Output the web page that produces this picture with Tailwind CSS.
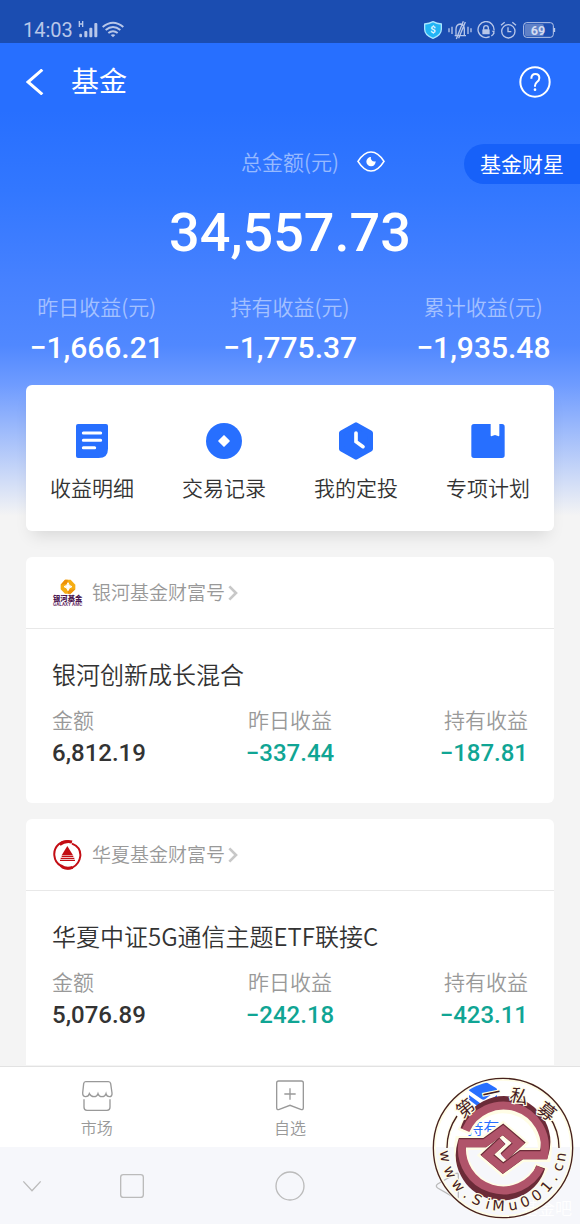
<!DOCTYPE html>
<html lang="zh-CN">
<head>
    <meta charset="UTF-8">
    <meta name="viewport" content="width=device-width, initial-scale=1.0">
    <title>基金</title>
    <script src="https://cdn.jsdelivr.net/npm/@tailwindcss/browser@4"></script>
</head>
<body class="relative min-h-screen bg-[#f4f4f4] font-['Noto_Sans_CJK_SC',sans-serif] font-[350] text-[#333]">
    <div class="bg-[linear-gradient(180deg,#276fff_0px,#276fff_110px,#3277ff_190px,#4681ff_280px,#5088ff_345px,#6e9bff_384px,#f4f4f4_516px)] bg-no-repeat">
        <!-- Status bar -->
        <div class="flex h-[43px] items-end justify-between bg-[#1b4db1] pr-[24px] pb-px pl-[23px] text-[#b8c7e9]">
            <div class="flex items-center">
                <span class="font-[Roboto] text-[20px] leading-[24px] font-normal">14:03</span>
                <svg class="ml-[5px] h-[18px] w-[20px]" viewBox="0 0 60 54" fill="currentColor">
                    <path d="M2 0h4v7h6V0h4v18h-4v-7H6v7H2z"/>
                    <rect x="4" y="38" width="8" height="11" rx="3"/>
                    <rect x="19" y="30" width="9" height="19" rx="3"/>
                    <rect x="34" y="20" width="9" height="29" rx="3"/>
                    <rect x="49" y="6" width="9" height="43" rx="3"/>
                </svg>
                <svg class="ml-[4px] h-[18px] w-[22px]" viewBox="0 0 66 54" fill="none" stroke="currentColor" stroke-width="6">
                    <path d="M2 18Q33-8 64 18M11 27q22-18 44 0M19 36q14-11 28 0"/>
                    <path d="M33 49l-7-7q7-5 14 0z" fill="currentColor" stroke="none"/>
                </svg>
            </div>
            <div class="flex h-[25px] items-center">
                <svg class="h-[18px] w-[18px]" viewBox="0 0 54 54">
                    <path d="M27 2Q38 8 52 9v16q0 18-25 27Q2 43 2 25V9q14-1 25-7z" fill="#22b4f5" stroke="#a9e6ff" stroke-width="4"/>
                    <text x="27" y="37" text-anchor="middle" fill="#dff5ff" font-family="Roboto" font-weight="700" font-size="29">$</text>
                </svg>
                <svg class="ml-[6px] h-[20px] w-[24px]" viewBox="0 0 72 60" fill="none" stroke="currentColor" stroke-width="4">
                    <path d="M3 25v12M12 20v22M60 20v22M69 25v12M20 47h34M24 46V28q0-15 13-16 12 1 12 16v18M46 4L25 57M52 6L32 55"/>
                </svg>
                <svg class="ml-[5px] h-[18px] w-[18px]" viewBox="0 0 54 54" fill="none" stroke="currentColor" stroke-width="4">
                    <path d="M38 47A24 24 0 1 1 51 28M43 45q6-4 8-10"/>
                    <path d="M44 29h9l-1 9z" fill="currentColor" stroke="none"/>
                    <rect x="16" y="25" width="22" height="15" rx="2" fill="currentColor" stroke="none"/>
                    <path d="M20 26v-5q0-7 7-7t7 7v5"/>
                </svg>
                <svg class="ml-[5px] h-[18px] w-[17px]" viewBox="0 0 51 54" fill="none" stroke="currentColor" stroke-width="4">
                    <circle cx="25" cy="31" r="20"/>
                    <path d="M24 19v13h10M3 13l11-9M48 13L37 4"/>
                </svg>
                <svg class="ml-[6px] h-[16px] w-[33px]" viewBox="0 0 99 48">
                    <rect x="2" y="2" width="89" height="44" rx="9" fill="none" stroke="currentColor" stroke-width="3"/>
                    <rect x="6" y="6" width="56" height="36" rx="4" fill="#5f80c6"/>
                    <path d="M94 18v12" stroke="currentColor" stroke-width="5"/>
                    <text x="45" y="38" text-anchor="middle" fill="#d3dcf2" font-family="Roboto" font-weight="700" font-size="38">69</text>
                </svg>
            </div>
        </div>

        <!-- Title bar -->
        <header class="flex h-[77px] items-center justify-between pr-[29px] pl-[26px] text-white">
            <div class="flex items-center">
                <a href="#" aria-label="返回">
                    <svg class="h-[26px] w-[18px]" viewBox="0 0 54 78" fill="none" stroke="currentColor" stroke-width="9">
                        <path d="M49 2L6 39l43 37"/>
                    </svg>
                </a>
                <h1 class="ml-[27px] pb-[4px] text-[28px] leading-[40px] font-normal">基金</h1>
            </div>
            <button type="button" aria-label="帮助">
                <svg class="h-[32px] w-[32px]" viewBox="0 0 96 96" fill="none" stroke="currentColor">
                    <circle cx="48" cy="48" r="44" stroke-width="6"/>
                    <path d="M37 38q0-14 12-14t12 12q0 7-7 12-6 5-6 11v3" stroke-width="6"/>
                    <circle cx="48" cy="71" r="4" fill="currentColor" stroke="none"/>
                </svg>
            </button>
        </header>

        <!-- Totals -->
        <section class="text-center text-white">
            <div class="grid grid-cols-[1fr_auto_1fr] items-start pt-[24px]">
                <span class="col-start-2 flex items-center gap-[18px] pl-[46px] text-[21px] leading-[34px] text-white/50">
                    总金额(元)
                    <button type="button" aria-label="隐藏金额" class="text-white">
                        <svg class="h-[21px] w-[28px]" viewBox="0 0 84 63" fill="none" stroke="currentColor" stroke-width="5">
                            <path d="M3 31Q21 3 42 3t39 28Q63 60 42 60T3 31z"/>
                            <path d="M42 18a14 14 0 1 0 14 13q-8 2-12-3-4-4-2-10z" fill="currentColor" stroke="none"/>
                        </svg>
                    </button>
                </span>
                <a href="#" class="justify-self-end rounded-l-full bg-[#1761f9] pr-[16px] pb-[2px] pl-[16px] text-[21px] leading-[38px] font-normal">基金财星</a>
            </div>
            <p class="mt-[17px] font-[Roboto] text-[54px] leading-[64px] font-medium">34,557.73</p>
            <dl class="mt-[27px] grid grid-cols-3">
                <div>
                    <dt class="text-[21px] leading-[28px] text-white/50">昨日收益(元)</dt>
                    <dd class="mt-[8px] font-[Roboto] text-[30px] leading-[40px] font-medium">−1,666.21</dd>
                </div>
                <div>
                    <dt class="text-[21px] leading-[28px] text-white/50">持有收益(元)</dt>
                    <dd class="mt-[8px] font-[Roboto] text-[30px] leading-[40px] font-medium">−1,775.37</dd>
                </div>
                <div>
                    <dt class="text-[21px] leading-[28px] text-white/50">累计收益(元)</dt>
                    <dd class="mt-[8px] font-[Roboto] text-[30px] leading-[40px] font-medium">−1,935.48</dd>
                </div>
            </dl>
        </section>

        <!-- Shortcuts -->
        <nav class="mx-[26px] mt-[17px] grid grid-cols-4 rounded-[6px] bg-white pt-[36px] pb-[30px] text-center text-[21px] leading-[28px] shadow-[0_10px_16px_-6px_rgba(0,0,0,0.12)]">
            <a href="#" class="flex flex-col items-center gap-[12px]">
                <svg class="h-[40px] w-[40px]" viewBox="0 0 120 120">
                    <path d="M18 9h84q6 0 6 6v68q0 28-28 28H18q-6 0-6-6V15q0-6 6-6z" fill="#276fff"/>
                    <path d="M34 36h52M34 58h52M34 80h34" stroke="#fff" stroke-width="9" stroke-linecap="round"/>
                </svg>
                收益明细
            </a>
            <a href="#" class="flex flex-col items-center gap-[12px]">
                <svg class="h-[40px] w-[40px]" viewBox="0 0 120 120">
                    <circle cx="60" cy="60" r="54" fill="#276fff"/>
                    <path d="M60 45l15 15-15 15-15-15z" fill="#fff" stroke="#fff" stroke-width="5" stroke-linejoin="round"/>
                </svg>
                交易记录
            </a>
            <a href="#" class="flex flex-col items-center gap-[12px]">
                <svg class="h-[40px] w-[40px]" viewBox="0 0 120 120">
                    <path d="M60 12l43 24v48l-43 24-43-24V36z" fill="#276fff" stroke="#276fff" stroke-width="16" stroke-linejoin="round"/>
                    <path d="M60 36v26l21 15" fill="none" stroke="#fff" stroke-width="11" stroke-linecap="round"/>
                </svg>
                我的定投
            </a>
            <a href="#" class="flex flex-col items-center gap-[12px]">
                <svg class="h-[40px] w-[40px]" viewBox="0 0 120 120">
                    <path d="M18 9h50v34q0 4 4 2l9-3 9 3q4 2 4-2V9h8q8 0 8 8v86q0 8-8 8H18q-8 0-8-8V17q0-8 8-8z" fill="#276fff"/>
                </svg>
                专项计划
            </a>
        </nav>
    </div>

    <!-- Funds -->
    <main class="mx-[26px] mt-[26px] flex flex-col gap-[16px] pb-px">
        <section class="rounded-[6px] bg-white">
            <a href="#" class="flex h-[72px] items-center border-b border-[#e8e8e8] px-[26px] text-[19px] text-[#999]">
                <svg class="h-[30px] w-[32px]" viewBox="0 0 96 90">
                    <path d="M39 5h17l14 15v14L56 47H39L26 34V20z" fill="#f5ad14"/>
                    <path d="M26 20L39 5h8v12zM70 34L56 47h-8V36z" fill="#ee9109"/>
                    <path d="M48 14q2 10 12 12-10 2-12 12-2-10-12-12 10-2 12-12z" fill="#fff" stroke="#fff" stroke-width="3"/>
                    <text x="47" y="68" text-anchor="middle" font-size="22" font-weight="900" fill="#4b1750">银河基金</text>
                    <text x="47" y="84" text-anchor="middle" font-family="Roboto" font-size="14" font-weight="700" fill="#6d3a70">GALAXY AMC</text>
                </svg>
                <span class="ml-[8px]">银河基金财富号</span>
                <svg class="ml-[3px] h-[16px] w-[10px]" viewBox="0 0 30 48" fill="none" stroke="#c8c8c8" stroke-width="8">
                    <path d="M4 4l20 20L4 44"/>
                </svg>
            </a>
            <div class="px-[26px] pt-[28px] pb-[34px]">
                <h2 class="text-[24px] leading-[34px]">银河创新成长混合</h2>
                <dl class="mt-[14px] grid grid-cols-3">
                    <div>
                        <dt class="text-[21px] leading-[28px] text-[#999]">金额</dt>
                        <dd class="mt-[4px] font-[Roboto] text-[24px] leading-[32px] font-medium">6,812.19</dd>
                    </div>
                    <div class="text-center">
                        <dt class="text-[21px] leading-[28px] text-[#999]">昨日收益</dt>
                        <dd class="mt-[4px] font-[Roboto] text-[24px] leading-[32px] font-medium text-[#10a594]">−337.44</dd>
                    </div>
                    <div class="text-right">
                        <dt class="text-[21px] leading-[28px] text-[#999]">持有收益</dt>
                        <dd class="mt-[4px] font-[Roboto] text-[24px] leading-[32px] font-medium text-[#10a594]">−187.81</dd>
                    </div>
                </dl>
            </div>
        </section>

        <section class="rounded-t-[6px] bg-white">
            <a href="#" class="flex h-[72px] items-center border-b border-[#e8e8e8] px-[26px] text-[19px] text-[#999]">
                <svg class="h-[30px] w-[32px]" viewBox="0 0 96 90" fill="none" stroke="#c30d14">
                    <path d="M58 7Q36-1 20 13 5 27 7 46q2 23 21 32" stroke-width="6"/>
                    <path d="M60 11q27 11 25 37-3 24-23 34-17 7-33-1" stroke-width="6"/>
                    <path d="M23 14Q39 1 60 6M26 77q16 12 36 5" stroke-width="9"/>
                    <path d="M46 18l17 28H29z" fill="#c30d14" stroke="none"/>
                    <path d="M29 49h35M26 55h41M24 61h45" stroke-width="4"/>
                </svg>
                <span class="ml-[8px]">华夏基金财富号</span>
                <svg class="ml-[3px] h-[16px] w-[10px]" viewBox="0 0 30 48" fill="none" stroke="#c8c8c8" stroke-width="8">
                    <path d="M4 4l20 20L4 44"/>
                </svg>
            </a>
            <div class="px-[26px] pt-[28px] pb-[34px]">
                <h2 class="text-[24px] leading-[34px]">华夏中证5G通信主题ETF联接C</h2>
                <dl class="mt-[14px] grid grid-cols-3">
                    <div>
                        <dt class="text-[21px] leading-[28px] text-[#999]">金额</dt>
                        <dd class="mt-[4px] font-[Roboto] text-[24px] leading-[32px] font-medium">5,076.89</dd>
                    </div>
                    <div class="text-center">
                        <dt class="text-[21px] leading-[28px] text-[#999]">昨日收益</dt>
                        <dd class="mt-[4px] font-[Roboto] text-[24px] leading-[32px] font-medium text-[#10a594]">−242.18</dd>
                    </div>
                    <div class="text-right">
                        <dt class="text-[21px] leading-[28px] text-[#999]">持有收益</dt>
                        <dd class="mt-[4px] font-[Roboto] text-[24px] leading-[32px] font-medium text-[#10a594]">−423.11</dd>
                    </div>
                </dl>
            </div>
        </section>
    </main>

    <!-- Tabs -->
    <nav class="grid grid-cols-3 border-t border-[#e2e2e2] bg-white pt-[13px] pb-[9px] text-[16px] leading-[22px] text-[#999]">
        <a href="#" class="flex flex-col items-center gap-[4px]">
            <svg class="h-[32px] w-[32px]" viewBox="0 0 96 96" fill="none" stroke="#999" stroke-width="4">
                <path d="M14 5h68q6 0 7 6l4 28q1 11-8 11-8 0-10-9-3 9-12 9t-12-9q-3 9-12 9t-14-9q-2 9-11 9-9 0-9-11l3-28q1-6 6-6z"/>
                <path d="M9 58v24q0 9 9 9h60q9 0 9-9V58"/>
            </svg>
            市场
        </a>
        <a href="#" class="flex flex-col items-center gap-[4px]">
            <svg class="h-[32px] w-[32px]" viewBox="0 0 96 96" fill="none" stroke="#999" stroke-width="4">
                <path d="M14 3h68q6 0 6 6v74q0 8-8 5L48 76 16 88q-8 3-8-5V9q0-6 6-6z"/>
                <path d="M48 25v34M31 42h34"/>
            </svg>
            自选
        </a>
        <a href="#" class="flex flex-col items-center gap-[4px] text-[#276fff]">
            <svg class="h-[32px] w-[32px]" viewBox="0 0 96 96" fill="#276fff">
                <path d="M43 4q5-3 10 0l34 20q6 4 0 9L55 57q-6 4-12 0L8 33q-6-5 0-9z"/>
                <path d="M6 45l37 27q6 4 12 0l35-27v14L55 87q-6 4-12 0L6 59z"/>
            </svg>
            持有
        </a>
    </nav>

    <!-- System navigation -->
    <div class="grid h-[77px] grid-cols-[53px_1fr_1fr_1fr_53px] items-center justify-items-center bg-[#f6f7fb]">
        <button type="button" aria-label="收起" class="justify-self-end pr-[11px]">
            <svg class="h-[12px] w-[20px]" viewBox="0 0 60 36" fill="none" stroke="#bbb" stroke-width="4">
                <path d="M4 4l26 28L56 4"/>
            </svg>
        </button>
        <button type="button" aria-label="最近任务">
            <svg class="h-[26px] w-[26px]" viewBox="0 0 78 78" fill="none" stroke="#bbb" stroke-width="4">
                <rect x="5" y="5" width="68" height="68" rx="8"/>
            </svg>
        </button>
        <button type="button" aria-label="主屏幕">
            <svg class="h-[30px] w-[30px]" viewBox="0 0 90 90" fill="none" stroke="#bbb" stroke-width="4">
                <circle cx="45" cy="45" r="42"/>
            </svg>
        </button>
        <button type="button" aria-label="返回">
            <svg class="h-[28px] w-[26px]" viewBox="0 0 78 84" fill="none" stroke="#bbb" stroke-width="4">
                <path d="M8 36L62 5q8-4 8 5v64q0 9-8 5L8 48q-8-6 0-12z"/>
            </svg>
        </button>
    </div>

    <!-- Stamp -->
    <span class="absolute right-[8px] bottom-[4px] text-[17px] leading-[24px] text-white">基金吧</span>
    <svg class="absolute right-[6px] bottom-[5px] h-[142px] w-[142px]" viewBox="0 0 426 426" fill="none">
        <g stroke="#fffde6" stroke-width="11">
            <circle cx="213" cy="213" r="207"/>
            <path d="M45 213A168 168 0 0 1 75 117M351 117A168 168 0 0 1 381 213"/>
        </g>
        <g stroke="#46201f" stroke-width="4">
            <circle cx="213" cy="213" r="209"/>
            <path d="M45 213A168 168 0 0 1 75 117M351 117A168 168 0 0 1 381 213"/>
        </g>
        <!-- Ring and knot -->
        <g stroke="#fffde6" stroke-width="42">
            <path d="M96 166A126 126 0 0 1 337 234H268L213 274 166 234 211 192"/>
            <path d="M330 266A126 126 0 0 1 89 198H158L213 158 260 198 215 240"/>
        </g>
        <g stroke="#6b2b38" stroke-width="28">
            <path d="M99 158A123 123 0 0 1 335 233H268L213 273 166 233 211 191"/>
            <path d="M326 270A123 123 0 0 1 91 197H158L213 157 260 197 215 239"/>
        </g>
        <g stroke="#b0546a" stroke-width="24">
            <path d="M101 160A124 124 0 0 1 336 235H268L213 275 166 235 211 193"/>
            <path d="M325 271A124 124 0 0 1 91 199H158L213 159 260 199 215 241"/>
        </g>
        <g fill="#46201f" stroke="#fffde6" stroke-width="7" paint-order="stroke" font-weight="400">
            <g font-size="54" text-anchor="middle">
                <text transform="translate(100 93) rotate(-38)" y="20">第</text>
                <text transform="translate(178 49) rotate(-12)" y="20">一</text>
                <text transform="translate(262 57) rotate(13)" y="20">私</text>
                <text transform="translate(345 103) rotate(38)" y="20">募</text>
            </g>
            <text font-family="DejaVu Sans" font-size="43"
                x="23 34 56 91 116 158 180 232 272 311 346 372 388 398"
                y="222 275 321 358 376 394 400 401 393 375 349 314 286 256"
                rotate="82 66 50 38 26 15 4 -10 -23 -35 -49 -60 -71 -81">www.SiMu001.cn</text>
        </g>
    </svg>
</body>
</html>
